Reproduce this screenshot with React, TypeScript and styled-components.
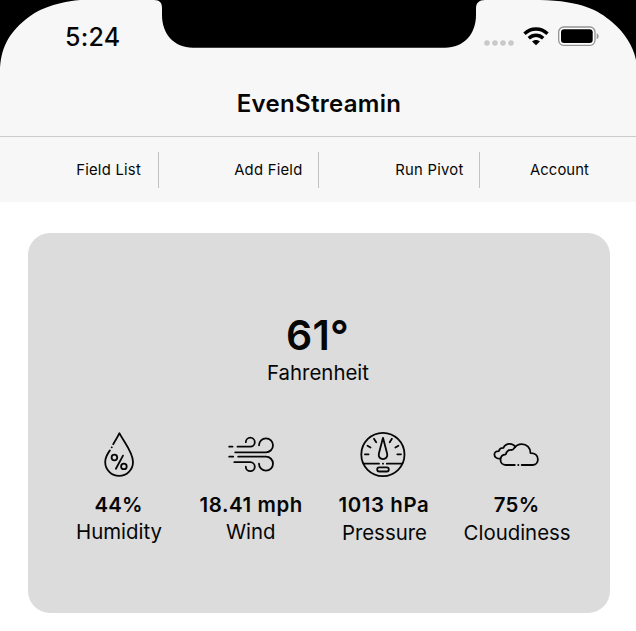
import React from 'react';
import styled, { createGlobalStyle } from 'styled-components';

const GlobalStyle = createGlobalStyle`
  * { box-sizing: border-box; }
  html, body { margin: 0; padding: 0; background: #fff; }
  body { font-family: Inter, 'Liberation Sans', sans-serif; color: #060606; }
`;

const Screen = styled.div`
  width: 636px;
  height: 631px;
  position: relative;
  overflow: hidden;
  background: #fff;
`;

const Bezel = styled.svg`
  position: absolute;
  top: 0;
  left: 0;
  pointer-events: none;
`;

const Header = styled.header`
  height: 202px;
  background: #f7f7f7;
`;

const StatusBar = styled.div`
  display: flex;
  justify-content: space-between;
  height: 72px;
  padding: 0 36px 0 65px;
`;

const Clock = styled.time`
  margin-top: 22px;
  font-size: 25px;
  line-height: 30px;
  font-weight: 500;
  letter-spacing: 0.2px;
`;

const StatusIcons = styled.svg`
  display: block;
  margin-top: 22px;
`;

const Title = styled.h1`
  margin: 0;
  height: 65px;
  padding: 17px 0 0 2px;
  text-align: center;
  font-size: 24px;
  line-height: 30px;
  font-weight: 600;
  letter-spacing: 0.3px;
  border-bottom: 1px solid #cbcbcb;
`;

const Nav = styled.nav`
  display: grid;
  grid-template-columns: 159px 160px 161px 156px;
  padding-top: 15px;
`;

const NavItem = styled.a<{ $end: number; $last?: boolean }>`
  height: 36px;
  padding-right: ${(p) => p.$end}px;
  border-right: ${(p) => (p.$last ? 'none' : '1.5px solid #c2c2c2')};
  text-align: right;
  white-space: nowrap;
  font-size: 14.8px;
  line-height: 36px;
  letter-spacing: ${(p) => (p.$last ? 0.1 : 0.25)}px;
`;

const Card = styled.main`
  width: 582px;
  height: 380px;
  margin: 31px 0 0 28px;
  padding-top: 82px;
  border-radius: 22px;
  background: #dcdcdc;
`;

const Temperature = styled.div`
  height: 44px;
  padding-right: 3px;
  text-align: center;
  font-size: 41px;
  line-height: 40px;
  font-weight: 600;
  letter-spacing: 0.3px;
`;

const Unit = styled.div`
  height: 73px;
  padding-right: 2px;
  text-align: center;
  font-size: 20.4px;
  line-height: 28px;
`;

const Metrics = styled.section`
  display: grid;
  grid-template-columns: repeat(4, 132.7px);
  padding-left: 24.7px;
`;

const Metric = styled.div`
  display: flex;
  flex-direction: column;
  align-items: center;
`;

const Icon = styled.svg`
  width: 48px;
  height: 48px;
  fill: none;
  stroke: #060606;
  stroke-width: 1.8;
  stroke-linecap: round;
  stroke-linejoin: round;
`;

const Value = styled.div<{ $spacing: number }>`
  margin-top: 11px;
  padding-right: 1px;
  white-space: nowrap;
  font-size: 20.4px;
  line-height: 28px;
  font-weight: 600;
  letter-spacing: ${(p) => p.$spacing}px;
`;

const Label = styled.div<{ $drop: number; $nudge: number }>`
  margin-top: ${(p) => p.$drop}px;
  padding-right: ${(p) => p.$nudge}px;
  white-space: nowrap;
  font-size: 20.4px;
  line-height: 28px;
`;

const tabs = [
  { name: 'Field List', end: 17 },
  { name: 'Add Field', end: 15.5 },
  { name: 'Run Pivot', end: 15.5 },
  { name: 'Account', end: 47 },
];

const metrics = [
  {
    value: '44%', label: 'Humidity', drop: -1, spacing: 0.2, nudge: 0,
    icon: (
      <>
        <path d="M18.200 12.300C20.500 8.500 22.800 4.600 24.400 1.200 28.500 9.500 38 20 38 30a13.900 13.900 0 0 1-27.800 0c0-4.300 2.100-8 4.700-11.600M16.700 15.400l.1-.1" />
        <circle cx="19.400" cy="25.500" r="2.800" />
        <circle cx="28.900" cy="34.400" r="2.800" />
        <path d="M28 23.600 20.900 36.800" />
      </>
    ),
  },
  {
    value: '18.41 mph', label: 'Wind', drop: -1, spacing: 0.6, nudge: 2,
    icon: (
      <>
        <path d="M1.200 14.700h3.300M9.500 14.700h12.800a4.500 4.500 0 1 0-4.500-4.500M7.200 20.300H38a7 7 0 1 0-7-7M1.200 24.700h4M10.200 24.700H38a7 7 0 1 1-7 7M6.300 30.200h16a4.500 4.500 0 1 1-4.500 4.500" />
      </>
    ),
  },
  {
    value: '1013 hPa', label: 'Pressure', drop: 0, spacing: 0.6, nudge: 0,
    icon: (
      <>
        <circle cx="22.900" cy="22.500" r="21.600" />
        <path d="M3.500 31.700h15.500M22.900 31.700h.2M26.800 31.700h15.500M4.900 22.300h3.700M37.300 22.300H41M7.500 13.700l3 1.800M38.400 13.700l-3 1.800M14 6.700l2.200 3.600M31.900 6.700l-2.200 3.600" />
        <path d="M23 5.800 18.900 21.500c-.9 3.500 1.400 5.600 4.100 5.600s5-2.100 4.100-5.600Z" />
        <rect x="17.200" y="35.300" width="11.600" height="4.200" rx="2" />
      </>
    ),
  },
  {
    value: '75%', label: 'Cloudiness', drop: 0, spacing: 0.2, nudge: 0,
    icon: (
      <>
        <path d="M21.800 33H12.500c-3 0-5-2.300-5-5.200 0-3.300 2.300-5.300 5.400-5.500.2-2.900 2.600-4.700 6-4.300.8-.2 1.600-.8 2.200-1.700 1.600-2.500 4.300-4.100 7.700-4.100 5 0 8.700 3.800 8.700 8.900 4.300-.2 7.400 2.300 7.400 6.100 0 3.400-2.300 5.800-5.500 5.800H28.700M25.200 33h.2" />
        <path d="M7.300 26.700C3.700 26.900 1.400 25 1.400 22.500c0-2.200 1.900-3.600 4.500-3.400.4-2 2-3.300 4.500-3.200 1.100-2.600 3.200-4.100 6.100-4.100 2.600 0 4.800 1.200 5.900 3.200" />
      </>
    ),
  },
];

export default function App() {
  return (
    <Screen>
      <GlobalStyle />
      <Header>
        <StatusBar>
          <Clock>5:24</Clock>
          <StatusIcons width="118" height="28" viewBox="482 22 118 28">
            <g fill="#c9c9c9">
              <circle cx="487" cy="43" r="2.800" />
              <circle cx="495" cy="43" r="2.800" />
              <circle cx="503" cy="43" r="2.800" />
              <circle cx="511" cy="43" r="2.800" />
            </g>
            <g fill="none" stroke="#000" strokeWidth="3.400">
              <path d="M524.500 33.800c6.500-6.400 16.500-6.400 23 0" />
              <path d="M528.800 38.300c4.200-4 10.200-4 14.400 0" />
            </g>
            <path d="m536 45.200-3.900-3.700c2.200-2 5.600-2 7.800 0Z" />
            <rect x="558.700" y="27" width="36.300" height="18.300" rx="5" fill="#fff" stroke="#929292" strokeWidth="1.300" />
            <rect x="561" y="29.300" width="31.700" height="13.700" rx="3" />
            <path d="M596.700 33.200c2.600 1 2.600 5 0 6Z" fill="#999" />
          </StatusIcons>
        </StatusBar>
        <Title>EvenStreamin</Title>
        <Nav>
          {tabs.map((tab, i) => (
            <NavItem key={tab.name} $end={tab.end} $last={i === tabs.length - 1}>
              {tab.name}
            </NavItem>
          ))}
        </Nav>
      </Header>
      <Card>
        <Temperature>61°</Temperature>
        <Unit>Fahrenheit</Unit>
        <Metrics>
          {metrics.map((m) => (
            <Metric key={m.label}>
              <Icon viewBox="0 0 48 48">{m.icon}</Icon>
              <Value $spacing={m.spacing}>{m.value}</Value>
              <Label $drop={m.drop} $nudge={m.nudge}>{m.label}</Label>
            </Metric>
          ))}
        </Metrics>
      </Card>
      <Bezel width="636" height="80" viewBox="0 0 636 80">
        <path d="M0 0H80C52 3 37 10 25 20 9 33 0 49 0 72ZM154 0C160 0 162 3 162 8V15C162 34 174 47.700 193 47.700H445C464 47.700 476 34 476 15V8C476 3 479 0 485 0ZM540 0C582 1 598 10 612 22 625 33 633 46 636 60V0Z" />
      </Bezel>
    </Screen>
  );
}
